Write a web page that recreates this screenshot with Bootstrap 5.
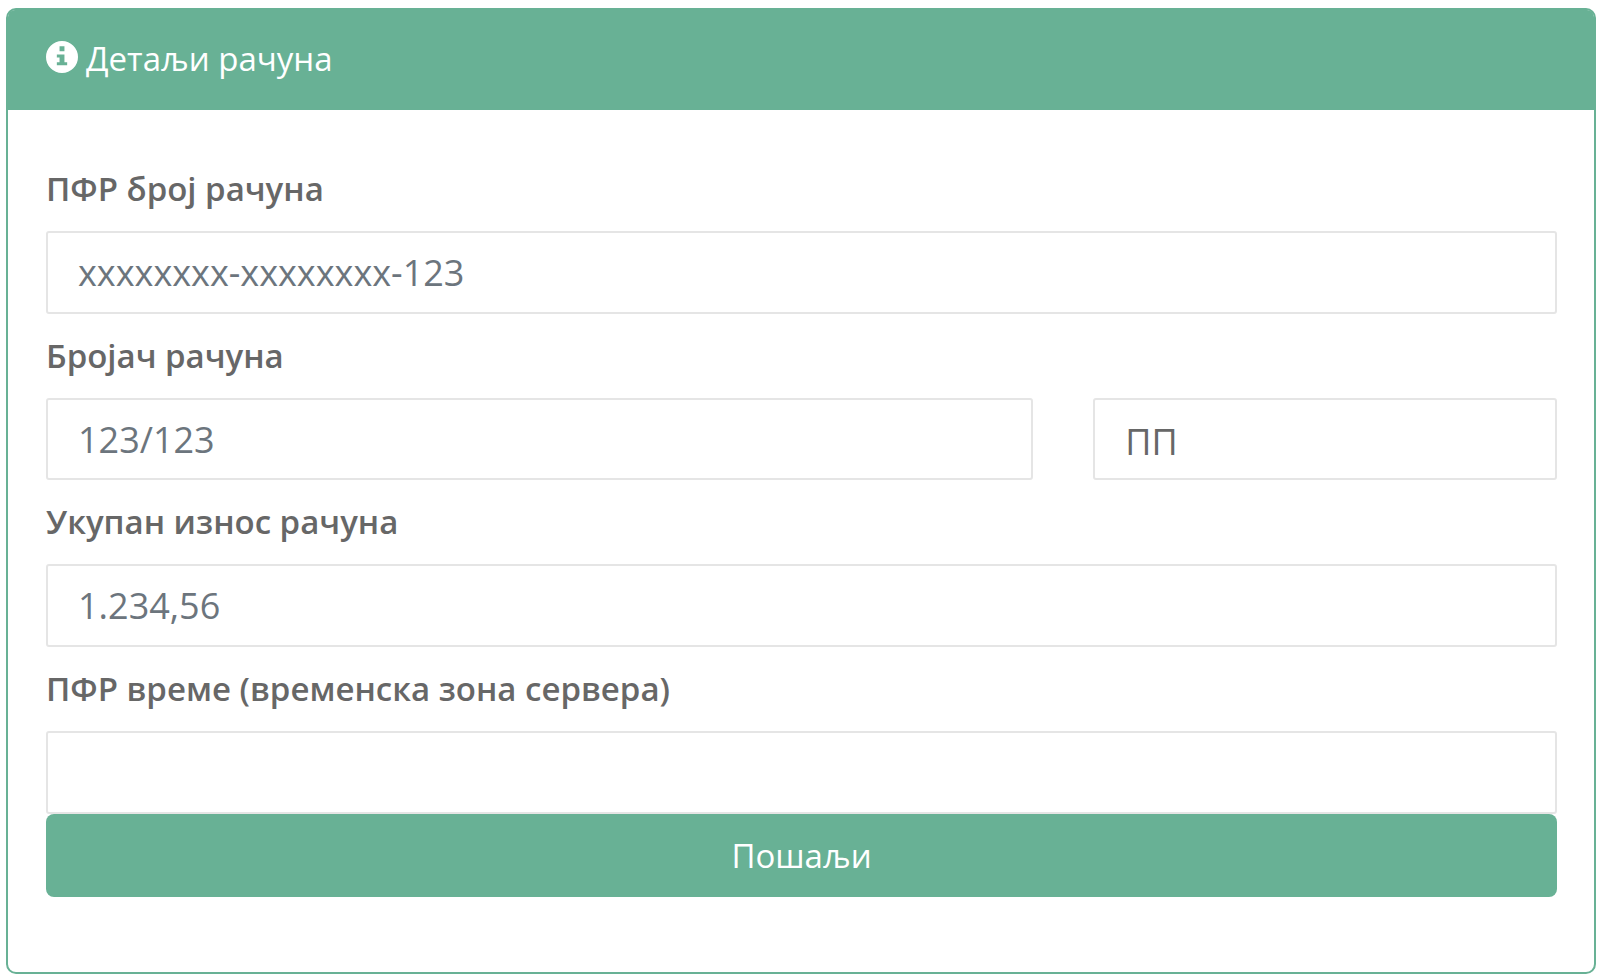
<!DOCTYPE html>
<html lang="sr">
<head>
<meta charset="utf-8">
<meta name="viewport" content="width=device-width, initial-scale=1">
<title>Детаљи рачуна</title>
<link href="https://cdn.jsdelivr.net/npm/bootstrap@5.3.0/dist/css/bootstrap.min.css" rel="stylesheet">
<style>
  :root { --brand: #68b195; --ink: #676767; --line: #e5e5e5; }
  body { font-family: "Open Sans", "Noto Sans", sans-serif; font-size: 33px; line-height: 51px; color: var(--ink); background: #fff; padding: 8px 5px 6px 6px; }
  .invoice-card { border: 2px solid var(--brand); border-radius: 10px; }
  .invoice-card .card-header { background: var(--brand); color: #fff; border: 0; border-radius: 7px 7px 0 0; padding: 23px 38px 26px; }
  .invoice-card .card-body { padding: 53px 37px 75px 38px; }
  .invoice-title { font-size: 33px; line-height: 51px; font-weight: 400; gap: 8px; }
  .info-icon { width: 32px; height: 32px; margin-bottom: 4px; }
  .field-label { font-weight: 600; margin-bottom: 17px; }
  .field { height: 83px; border: 2px solid var(--line); border-radius: 3px; padding: 0 30px; font-size: 36px; line-height: 54px; color: var(--ink); background-color: #fff; }
  .field::placeholder { color: #6c757d; }
  select.field { background-image: none; padding-top: 6px; }
  .field-group { margin-bottom: 16px; }
  .counter-row { --bs-gutter-x: 60px; }
  .counter-row .field { height: 82px; }
  .btn-brand { --bs-btn-color: #fff; --bs-btn-bg: var(--brand); --bs-btn-hover-color: #fff; --bs-btn-hover-bg: #579f84; --bs-btn-active-bg: #579f84; border: 0; border-radius: 8px; font-size: 33px; line-height: 51px; padding: 16px; }
</style>
</head>
<body>
<main class="card invoice-card">
  <div class="card-header">
    <h1 class="invoice-title d-flex align-items-center mb-0">
      <svg class="info-icon flex-shrink-0" viewBox="8 8 496 496" fill="#fff" aria-hidden="true"><path fill-rule="evenodd" d="M256 8a248 248 0 1 0 0 496a248 248 0 1 0 0-496zM218 90h76v76h-76zM176 218h118v118h42v46H176v-46h42v-72h-42z"/></svg>
      <span>Детаљи рачуна</span>
    </h1>
  </div>
  <form class="card-body">
    <div class="field-group">
      <label class="field-label d-block" for="number">ПФР број рачуна</label>
      <input class="form-control field" id="number" type="text" placeholder="xxxxxxxx-xxxxxxxx-123">
    </div>
    <div class="field-group">
      <label class="field-label d-block" for="counter">Бројач рачуна</label>
      <div class="row counter-row">
        <div class="col-8"><input class="form-control field" id="counter" type="text" placeholder="123/123"></div>
        <div class="col-4"><select class="form-select field" aria-label="Врста рачуна"><option>ПП</option></select></div>
      </div>
    </div>
    <div class="field-group">
      <label class="field-label d-block" for="total">Укупан износ рачуна</label>
      <input class="form-control field" id="total" type="text" placeholder="1.234,56">
    </div>
    <div>
      <label class="field-label d-block" for="time">ПФР време (временска зона сервера)</label>
      <input class="form-control field" id="time" type="text">
    </div>
    <button class="btn btn-brand d-block w-100" type="submit">Пошаљи</button>
  </form>
</main>
<script src="https://cdn.jsdelivr.net/npm/bootstrap@5.3.0/dist/js/bootstrap.bundle.min.js"></script>
</body>
</html>
